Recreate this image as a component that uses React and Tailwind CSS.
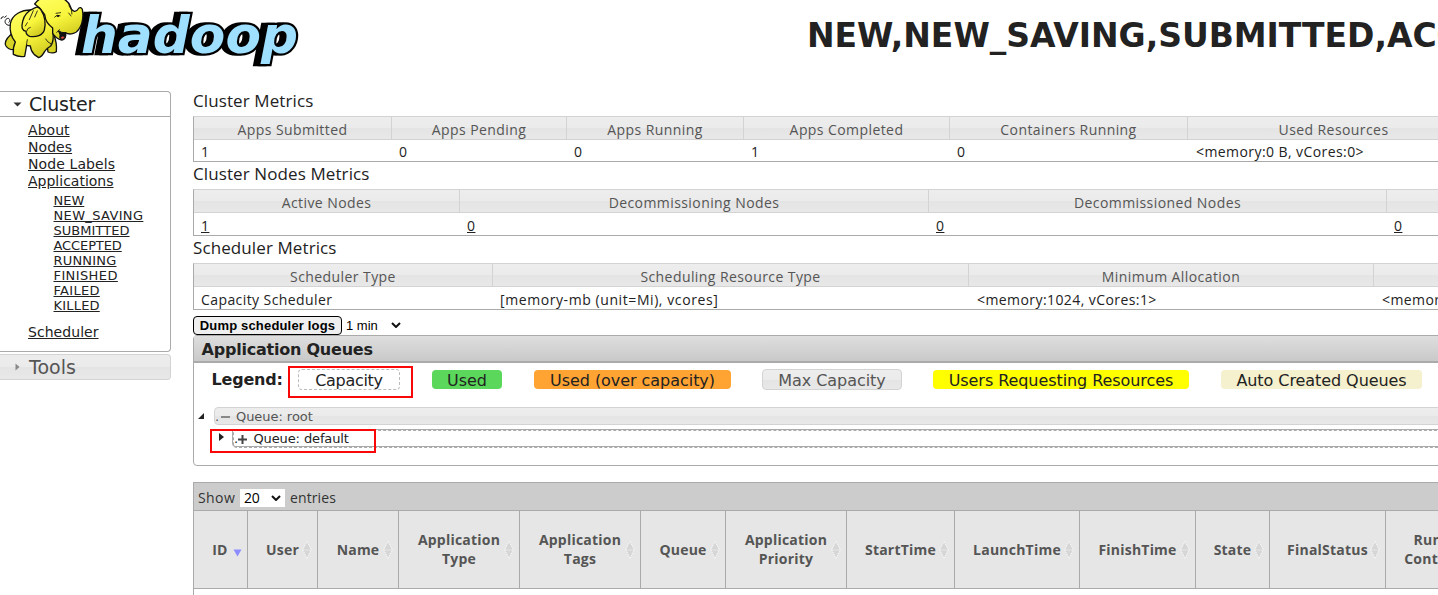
import React from "react";

const glass =
  "bg-[linear-gradient(to_bottom,#ededed_0%,#ebebeb_50%,#e4e4e4_50%,#e8e8e8_100%)]";

function Logo() {
  return (
    <svg width="302" height="70" viewBox="0 0 302 70" className="block shrink-0">
      <defs>
        <linearGradient id="skin" x1="0" y1="0" x2="0.5" y2="1">
          <stop offset="0" stopColor="#ffff66" />
          <stop offset="0.6" stopColor="#f8f53c" />
          <stop offset="1" stopColor="#d3ce22" />
        </linearGradient>
      </defs>
      <text
        x="81" y="53" fill="#9fdfff" stroke="#000" strokeWidth="4.5" paintOrder="stroke" strokeLinejoin="miter"
        fontFamily='"DejaVu Sans", sans-serif' fontWeight="700" fontStyle="italic" fontSize="52"
        textLength="217" lengthAdjust="spacingAndGlyphs"
        className="drop-shadow-[-5px_0px_0_#000]"
      >
        hadoop
      </text>
      <g transform="scale(.33333)" stroke="#111" strokeWidth="4" strokeLinejoin="round" strokeLinecap="round">
        <path fill="none" d="M36 74C20 82 10 66 18 58S34 60 27 67M14 52l5-4M3 56q0-5 7-6" strokeWidth="3" />
        <path fill="#d8d426" d="M32 104Q10 124 18 138Q26 150 42 149L52 110ZM140 125L144 156Q160 162 169 155Q172 130 160 100Z" />
        <path fill="url(#skin)" d="M92 30C66 30 36 42 31 72C28 96 36 114 46 126Q38 143 40 163Q56 172 74 169L80 136L91 138Q92 152 103 164L116 173Q126 170 134 154Q140 145 152 138Q162 124 159 99L170 90L138 40Z" />
        <path fill="url(#skin)" d="M104 12C119 -9 142 -15 169 -8C190 -8 207 5 211 19C215 34 226 41 237 24Q242 20 247 28C251 51 247 72 237 87C228 103 207 105 196 98Q199 118 185 120C172 117 163 108 158 100L158 84C144 73 136 64 134 44L118 23Z" />
        <path fill="#111" strokeWidth="3" d="M176 93Q185 99 197 98Q200 117 187 119Q176 116 180 106Z" />
        <path fill="#d94b45" stroke="none" d="M183 112Q188 107 194 111Q190 117 185 117Z" />
        <path fill="url(#skin)" d="M106 23C86 31 72 46 68 64C63 82 66 91 78 94Q78 105 89 109C109 112 128 106 133 90C139 65 133 45 122 28Q112 18 106 23Z" />
        <path fill="none" strokeWidth="2.5" d="M100 32L88 59M112 33L104 51M82 68L76 78M164 51Q170 42 180 47M168 40L182 38M207 17Q218 31 216 42M206 39L213 48M82 119Q80 129 79 138M137 117Q143 128 152 131M80 93Q82 83 91 82M170 97L179 89" />
        <ellipse cx="174" cy="48" rx="4" ry="3" fill="#111" stroke="none" />
      </g>
    </svg>
  );
}

function Sidebar() {
  const apps = ["NEW", "NEW_SAVING", "SUBMITTED", "ACCEPTED", "RUNNING", "FINISHED", "FAILED", "KILLED"];
  const spread = ["tracking-[0px]", "tracking-[0.35px]", "tracking-[0.05px]", "tracking-[-0.1px]", "tracking-[0.2px]", "tracking-[0.4px]", "tracking-[0.3px]", "tracking-[0.2px]"];
  return (
    <nav className="w-[171px] shrink-0 font-['DejaVu_Sans',sans-serif] text-[#222]">
      <div className="h-[26px] rounded-tr-[4px] border border-l-0 border-[#aaa] flex items-center pl-[13px]">
        <svg width="9" height="5" viewBox="0 0 9 5"><path d="M0.5 0.5h8L4.5 4.5z" fill="#333" /></svg>
        <span className="ml-[7px] text-[19px] leading-6 tracking-[-0.2px]">Cluster</span>
      </div>
      <div className="h-[235px] rounded-br-[4px] border border-t-0 border-l-0 border-[#aaa] pl-[28px] pt-[5px] text-[14px] leading-[17px] tracking-[0.05px]">
        <ul className="underline">
          <li>About</li>
          <li>Nodes</li>
          <li className="tracking-[0.1px]">Node Labels</li>
          <li className="tracking-[0px]">Applications</li>
        </ul>
        <ul className="pl-[25.5px] pt-[3px] text-[13px] leading-[15px] underline">
          {apps.map((a, i) => <li key={a} className={spread[i]}>{a}</li>)}
        </ul>
        <div className="pt-[11px] underline">Scheduler</div>
      </div>
      <div className={"mt-[2px] h-[26px] rounded-r-[4px] border border-l-0 border-[#d3d3d3] flex items-center pl-[15px] text-[#555] " + glass}>
        <svg width="5" height="8" viewBox="0 0 5 8"><path d="M0.5 0.5v7L4.5 4z" fill="#888" /></svg>
        <span className="ml-[9px] text-[19px] leading-[22px]">Tools</span>
      </div>
    </nav>
  );
}

function Metrics({ title, cols, heads, values, link, tall, className }) {
  return (
    <section className={className}>
      <h3 className="h-[25px] text-[17px] leading-[20px] tracking-[0.1px] text-[#222]">{title}</h3>
      <div className="border border-r-0 border-[#aaa] border-t-[#d3d3d3] w-[1400px] tracking-[0.42px]">
        <div className={"grid h-[23px] border-b border-[#d3d3d3] text-[#555] " + cols + " " + glass}>
          {heads.map((h, i) => (
            <div key={i} className="h-[22px] border-r border-[#d3d3d3] text-center leading-[25px]">{h}</div>
          ))}
        </div>
        <div className={"grid text-[#222] " + cols + (tall ? " h-[22px] leading-[26px]" : " h-[21px] leading-[24px]")}>
          {values.map((v, i) => (
            <div key={i} className={(v[0] === "<" ? "pl-[8px]" : "pl-[7px]") + (v[0] === "[" ? " tracking-[0.58px]" : "") + (link ? " underline" : "")}>{v}</div>
          ))}
        </div>
      </div>
    </section>
  );
}

const Chevron = () => (
  <svg width="10" height="6" viewBox="0 0 10 6" className="shrink-0">
    <path d="M1 1l4 4 4-4" fill="none" stroke="#111" strokeWidth="2" />
  </svg>
);

function Queues() {
  return (
    <section className="relative h-[131px] w-[1400px] rounded-l-[4px] border border-[#aaa] font-['DejaVu_Sans',sans-serif] text-[16px] text-[#222]">
      <h3 className="h-[27px] border-b-2 border-[#aaa] bg-linear-to-b from-[#dedede] to-[#c9c9c9] pl-[7.5px] font-bold leading-[27px] tracking-[-0.22px]">
        Application Queues
      </h3>
      <div className="flex items-center pl-[17.5px] pt-[6px] leading-[21px]">
        <span className="w-[86.5px] font-bold tracking-[-0.2px]">Legend:</span>
        <span className="h-[21px] w-[102px] rounded-[4px] border border-dashed border-[#bbb] text-center tracking-[-0.3px]">Capacity</span>
        <span className="ml-[32px] h-[19px] w-[70px] rounded-[4px] bg-[#5bd75b] text-center">Used</span>
        <span className="ml-[32px] h-[19px] w-[197px] rounded-[4px] bg-[#ffa333] text-center tracking-[-0.05px]">Used (over capacity)</span>
        <span className={"ml-[31px] h-[21px] w-[140px] rounded-[4px] border border-[#d3d3d3] text-center tracking-[-0.05px] text-[#555] " + glass}>Max Capacity</span>
        <span className="ml-[31px] h-[19px] w-[256px] rounded-[4px] bg-[#ffff00] text-center tracking-[-0.07px]">Users Requesting Resources</span>
        <span className="ml-[32px] h-[19px] w-[201px] rounded-[4px] bg-[#f5f0cd] text-center tracking-[-0.07px]">Auto Created Queues</span>
      </div>
      <div className="mt-[17px] flex items-center pl-[4px] text-[13px] leading-4">
        <svg width="6" height="6" viewBox="0 0 6 6"><path d="M6 0v6H0z" fill="#222" /></svg>
        <div className={"ml-[10px] flex h-[18px] flex-1 items-center rounded-l-[4px] border border-[#d3d3d3] text-[#555] " + glass}>
          <span className="w-[5px] pt-[2px]">.</span>
          <svg width="9" height="2" className="ml-[1px] mt-px"><path d="M0 0h9v2H0z" fill="#888" /></svg>
          <span className="ml-[6px] pt-[2px] tracking-[-0.05px]">Queue: root</span>
        </div>
      </div>
      <div className="mt-[4px] flex items-start pl-[25px] text-[13px] leading-4">
        <svg width="5" height="8" viewBox="0 0 5 8" className="mt-[4px]"><path d="M0 0v8L5 4z" fill="#222" /></svg>
        <div className="ml-[8px] h-[18px] flex-1 rounded-bl-[4px] border border-r-0 border-[#aaa]">
          <div className="flex h-[18px] items-center rounded-bl-[4px] border border-r-0 border-dashed border-[#aaa]">
            <span className="w-[4px]">.</span>
            <svg width="9" height="9"><path d="M0 4.5h9M4.5 0v9" stroke="#444" strokeWidth="2" /></svg>
            <span className="ml-[6.5px] tracking-[-0.12px]">Queue: default</span>
          </div>
        </div>
      </div>
      <div className="absolute left-[94px] top-[30px] h-[32px] w-[125px] border-2 border-[#f80808]" />
      <div className="absolute left-[16px] top-[93px] h-[24px] w-[166px] border-2 border-[#f80808]" />
    </section>
  );
}

const Sort = () => (
  <svg width="10" height="18" viewBox="0 0 10 18" className="shrink-0">
    <path d="M5 0.5L9 8.5H1zM5 17.5L9 9.5H1z" fill="#d6d6d6" />
    <path d="M5 0.5L9.3 8.5L5 17.5L0.7 8.5z" fill="none" stroke="#fafafa" strokeDasharray="1.5 1" />
  </svg>
);

function AppsTable() {
  const heads = ["ID", "User", "Name", "Application Type", "Application Tags", "Queue", "Application Priority", "StartTime", "LaunchTime", "FinishTime", "State", "FinalStatus", "Running Containers"];
  return (
    <section className="mt-[16px] h-[120px] w-[1400px] border border-[#aaa]">
      <div className="flex h-[28px] items-center border-b border-[#aaa] bg-[#ccc] pl-[4px] pt-[2px] text-[#333]">
        <span className="w-[42px] tracking-[0.4px]">Show</span>
        <div className="flex h-[18px] w-[45px] items-center justify-between bg-white pl-[4px] pr-[4px] text-black">
          <span className="tracking-[-0.2px]">20</span>
          <Chevron />
        </div>
        <span className="ml-[5px] tracking-[0.1px]">entries</span>
      </div>
      <div className="grid h-[78px] grid-cols-[54px_70px_81px_121px_121px_85px_121px_108px_125px_116px_74px_116px_116px] border-b border-[#aaa] bg-[#e6e6e6] font-bold leading-[19px] tracking-[0.22px] text-[#555]">
        {heads.map((h, i) => (
          <div key={h} className="flex h-[77px] items-center border-r border-[#aaa] pr-[5px]">
            <span className={"flex-1 text-center " + (i === 0 ? "pl-[13px]" : "pl-[15px]") + (h.includes(" ") ? " pb-px" : "")}>
              {h.split(" ").map((w) => <span key={w} className="block">{w}</span>)}
            </span>
            {i === 0 ? (
              <svg width="9" height="8" viewBox="0 0 9 8" className="mt-[7px] shrink-0"><path d="M0.5 0.5h8L4.5 7.5z" fill="#8d8dff" /></svg>
            ) : <Sort />}
          </div>
        ))}
      </div>
    </section>
  );
}

export default function App() {
  return (
    <div className="h-[595px] w-[1438px] overflow-hidden bg-white font-['Open_Sans','Noto_Sans',sans-serif] text-[14px]">
      <header className="flex h-[91px] items-start">
        <Logo />
        <h1 className="ml-[505px] whitespace-nowrap pt-[16px] font-['DejaVu_Sans',sans-serif] text-[33px] font-bold leading-[40px] tracking-[-0.03px] text-[#222]">
          NEW,NEW_SAVING,SUBMITTED,ACCEPTED,RUNNING Applications
        </h1>
      </header>
      <div className="flex">
        <Sidebar />
        <main className="ml-[22px] w-[1245px] shrink-0 overflow-hidden whitespace-nowrap">
          <Metrics
            title="Cluster Metrics"
            cols="grid-cols-[198px_175px_177px_206px_238px_292px_1fr]"
            heads={["Apps Submitted", "Apps Pending", "Apps Running", "Apps Completed", "Containers Running", "Used Resources"]}
            values={["1", "0", "0", "1", "0", "<memory:0 B, vCores:0>"]}
          />
          <Metrics
            className="mt-[2px]"
            title="Cluster Nodes Metrics"
            cols="grid-cols-[266px_469px_458px_1fr]"
            heads={["Active Nodes", "Decommissioning Nodes", "Decommissioned Nodes", ""]}
            values={["1", "0", "0", "0"]}
            link
            tall
          />
          <Metrics
            className="mt-[2px]"
            title="Scheduler Metrics"
            cols="grid-cols-[299px_476px_405px_1fr]"
            heads={["Scheduler Type", "Scheduling Resource Type", "Minimum Allocation", ""]}
            values={["Capacity Scheduler", "[memory-mb (unit=Mi), vcores]", "<memory:1024, vCores:1>", "<memory:8192, vCores:4>"]}
            tall
          />
          <div className="flex h-[25px] items-center pt-[5px] font-['Liberation_Sans',sans-serif] text-[13px] text-black">
            <button className="h-[19px] w-[149px] rounded-[4px] border-[1.5px] border-black bg-[#efefef] text-center font-bold leading-[17px] tracking-[0.17px]">Dump scheduler logs</button>
            <span className="ml-[4px] mr-[14px] w-[31px] pt-px">1 min</span>
            <Chevron />
          </div>
          <Queues />
          <AppsTable />
        </main>
      </div>
    </div>
  );
}
